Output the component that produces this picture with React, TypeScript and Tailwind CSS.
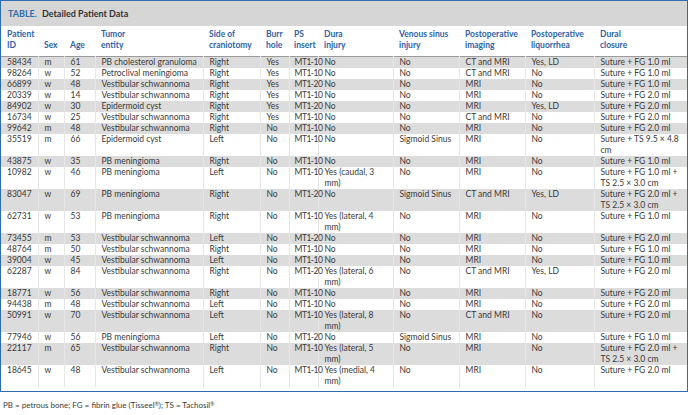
import React from "react";

type Row = string[];

// id, sex, age, entity, side, burr, ps, dura, venous, imaging, liquorrhea, closure
const rows: Row[] = [
  ["58434", "m", "61", "PB cholesterol granuloma", "Right", "Yes", "MT1-10", "No", "No", "CT and MRI", "Yes, LD", "Suture + FG 1.0 ml"],
  ["98264", "w", "52", "Petroclival meningioma", "Right", "Yes", "MT1-10", "No", "No", "CT and MRI", "No", "Suture + FG 1.0 ml"],
  ["66899", "w", "48", "Vestibular schwannoma", "Right", "Yes", "MT1-20", "No", "No", "MRI", "No", "Suture + FG 1.0 ml"],
  ["20339", "w", "14", "Vestibular schwannoma", "Right", "Yes", "MT1-10", "No", "No", "MRI", "No", "Suture + FG 2.0 ml"],
  ["84902", "w", "30", "Epidermoid cyst", "Right", "Yes", "MT1-20", "No", "No", "MRI", "Yes, LD", "Suture + FG 2.0 ml"],
  ["16734", "w", "25", "Vestibular schwannoma", "Right", "Yes", "MT1-10", "No", "No", "CT and MRI", "No", "Suture + FG 2.0 ml"],
  ["99642", "m", "48", "Vestibular schwannoma", "Right", "No", "MT1-10", "No", "No", "MRI", "No", "Suture + FG 2.0 ml"],
  ["35519", "m", "66", "Epidermoid cyst", "Left", "No", "MT1-10", "No", "Sigmoid Sinus", "MRI", "No", "Suture + TS 9.5 × 4.8\ncm"],
  ["43875", "w", "35", "PB meningioma", "Right", "No", "MT1-10", "No", "No", "MRI", "No", "Suture + FG 1.0 ml"],
  ["10982", "w", "46", "PB meningioma", "Left", "No", "MT1-10", "Yes (caudal, 3\nmm)", "No", "MRI", "No", "Suture + FG 1.0 ml +\nTS 2.5 × 3.0 cm"],
  ["83047", "w", "69", "PB meningioma", "Right", "No", "MT1-20", "No", "Sigmoid Sinus", "CT and MRI", "Yes, LD", "Suture + FG 2.0 ml +\nTS 2.5 × 3.0 cm"],
  ["62731", "w", "53", "PB meningioma", "Right", "No", "MT1-10", "Yes (lateral, 4\nmm)", "No", "MRI", "No", "Suture + FG 1.0 ml"],
  ["73455", "m", "53", "Vestibular schwannoma", "Left", "No", "MT1-20", "No", "No", "MRI", "No", "Suture + FG 2.0 ml"],
  ["48764", "m", "50", "Vestibular schwannoma", "Right", "No", "MT1-10", "No", "No", "MRI", "No", "Suture + FG 1.0 ml"],
  ["39004", "w", "45", "Vestibular schwannoma", "Left", "No", "MT1-10", "No", "No", "MRI", "No", "Suture + FG 1.0 ml"],
  ["62287", "w", "84", "Vestibular schwannoma", "Right", "No", "MT1-20", "Yes (lateral, 6\nmm)", "No", "CT and MRI", "Yes, LD", "Suture + FG 2.0 ml"],
  ["18771", "w", "56", "Vestibular schwannoma", "Right", "No", "MT1-10", "No", "No", "MRI", "No", "Suture + FG 2.0 ml"],
  ["94438", "m", "48", "Vestibular schwannoma", "Left", "No", "MT1-10", "No", "No", "MRI", "No", "Suture + FG 2.0 ml"],
  ["50991", "w", "70", "Vestibular schwannoma", "Left", "No", "MT1-10", "Yes (lateral, 8\nmm)", "No", "CT and MRI", "No", "Suture + FG 2.0 ml"],
  ["77946", "w", "56", "PB meningioma", "Left", "No", "MT1-20", "No", "Sigmoid Sinus", "MRI", "No", "Suture + FG 1.0 ml"],
  ["22117", "m", "65", "Vestibular schwannoma", "Right", "No", "MT1-10", "Yes (lateral, 5\nmm)", "No", "MRI", "No", "Suture + FG 2.0 ml +\nTS 2.5 × 3.0 cm"],
  ["18645", "w", "48", "Vestibular schwannoma", "Left", "No", "MT1-10", "Yes (medial, 4\nmm)", "No", "MRI", "No", "Suture + FG 2.0 ml"],
];

const headers = [
  "Patient\nID",
  "Sex",
  "Age",
  "Tumor\nentity",
  "Side of\ncraniotomy",
  "Burr\nhole",
  "PS\ninsert",
  "Dura\ninjury",
  "Venous sinus\ninjury",
  "Postoperative\nimaging",
  "Postoperative\nliquorrhea",
  "Dural\nclosure",
];

const widths = [
  "w-[37px]",
  "w-[26px]",
  "w-[31px]",
  "w-[108px]",
  "w-[57px]",
  "w-[29px]",
  "w-[29px]",
  "w-[75px]",
  "w-[66px]",
  "w-[66px]",
  "w-[69px]",
  "w-[93px]",
];

// the PS insert values are set tight in the print layout
const cellExtra = [
  "pl-[6px]",
  "pl-[6px]",
  "pl-[6px]",
  "pl-[6px]",
  "pl-[6px]",
  "pl-[6px]",
  "pl-[5px] tracking-[-0.5px]",
  "pl-[6px]",
  "pl-[6px]",
  "pl-[6px]",
  "pl-[6px]",
  "pl-[6px]",
];

export default function App() {
  return (
    <div className="w-[688px] h-[415px] overflow-hidden bg-white font-['Lato','Liberation_Sans',sans-serif] text-[#3a3a3a]">
      <div className="border border-[#2f6cae]">
        {/* title band */}
        <div className="h-[25px] bg-[#d6d6d6] flex items-center px-[7px] text-[9px] font-bold">
          <span className="text-[#2f6cae] mr-[5px]">TABLE.</span>
          <span className="text-[#333]">Detailed Patient Data</span>
        </div>

        <table className="table-fixed border-collapse w-full text-[8.5px] leading-[11px]">
          <colgroup>
            {widths.map((w, i) => (
              <col key={i} className={w} />
            ))}
          </colgroup>
          <thead>
            <tr className="border-b border-[#9a9a9a]">
              {headers.map((h, i) => (
                <th
                  key={i}
                  className={
                    "text-left align-bottom font-bold text-[#2f62a8] pt-[3px] pb-[5px] whitespace-pre " +
                    (i === 6 ? "pl-[5px]" : "pl-[6px]")
                  }
                >
                  {h}
                </th>
              ))}
            </tr>
          </thead>
          <tbody>
            {rows.map((r, ri) => (
              <tr key={ri} className={ri % 2 === 0 ? "bg-[#dcdcdc]" : "bg-white"}>
                {r.map((c, ci) => (
                  <td
                    key={ci}
                    className={
                      "align-top whitespace-pre " +
                      cellExtra[ci] +
                      (ci > 0 ? " border-l border-[#e6e6e6]" : "")
                    }
                  >
                    {c}
                  </td>
                ))}
              </tr>
            ))}
            <tr>
              <td colSpan={12} className="h-[4px]" />
            </tr>
          </tbody>
        </table>
      </div>

      {/* footnote */}
      <div className="px-[3px] pt-[8px] pb-[5px] text-[8px] leading-[10px] border-b border-[#7ea6d2]">
        PB = petrous bone; FG = fibrin glue (Tisseel<sup className="text-[5px]">®</sup>); TS = Tachosil
        <sup className="text-[5px]">®</sup>
      </div>
    </div>
  );
}
